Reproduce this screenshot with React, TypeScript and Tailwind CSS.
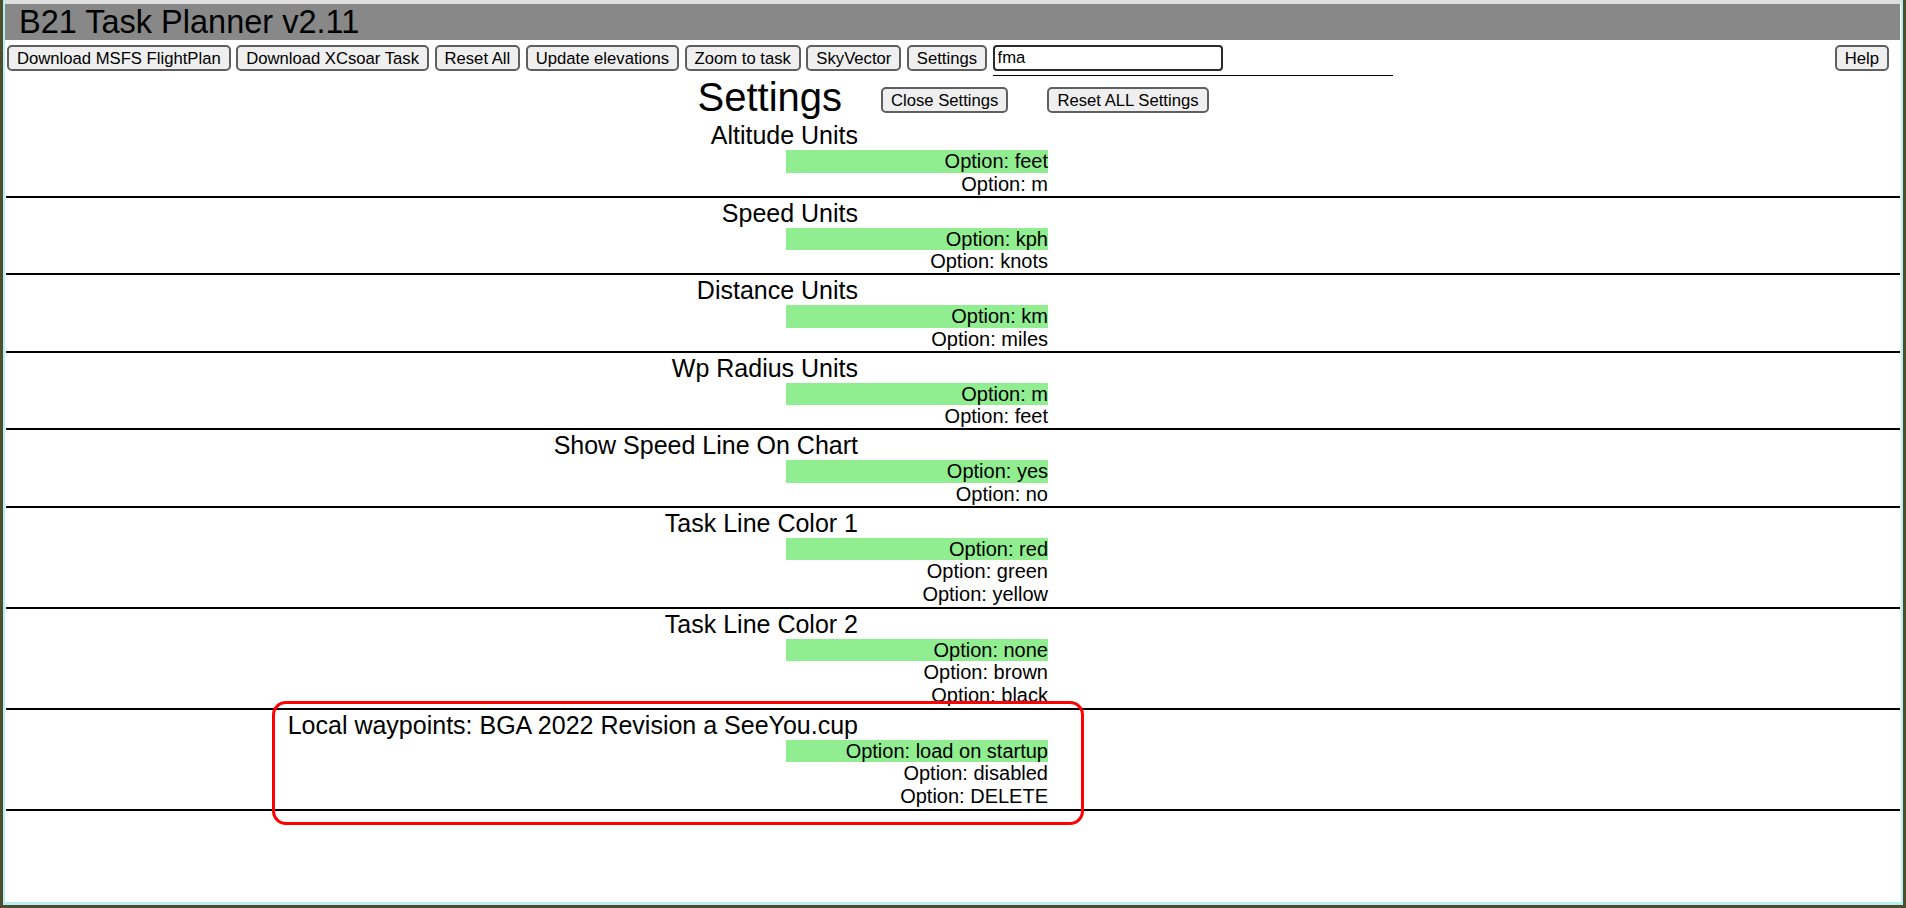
import React from 'react'

const settings = [
  { title: 'Altitude Units', options: ['feet', 'm'] },
  { title: 'Speed Units', options: ['kph', 'knots'] },
  { title: 'Distance Units', options: ['km', 'miles'] },
  { title: 'Wp Radius Units', options: ['m', 'feet'] },
  { title: 'Show Speed Line On Chart', options: ['yes', 'no'] },
  { title: 'Task Line Color 1', options: ['red', 'green', 'yellow'] },
  { title: 'Task Line Color 2', options: ['none', 'brown', 'black'] },
  {
    title: 'Local waypoints: BGA 2022 Revision a SeeYou.cup',
    options: ['load on startup', 'disabled', 'DELETE'],
    marked: true,
  },
]

const toolbar = [
  'Download MSFS FlightPlan',
  'Download XCsoar Task',
  'Reset All',
  'Update elevations',
  'Zoom to task',
  'SkyVector',
  'Settings',
]

function Btn({ label }: { label: string }) {
  return (
    <button className="h-[26px] shrink-0 rounded-[5px] border-2 border-[#5f5f5f] bg-[#efefef] px-[8px] text-[16.67px] leading-[19px] text-black">
      {label}
    </button>
  )
}

function SettingRow({ title, options, marked }: { title: string; options: string[]; marked?: boolean }) {
  return (
    <div className={options.length > 2 ? 'relative border-b-2 border-black pb-[0.75px]' : 'relative border-b-2 border-black'}>
      {/* heading */}
      <div className="h-[30px] w-[852px] whitespace-nowrap text-right text-[25px] leading-[30px]">{title}</div>

      {/* options, first one is the active one */}
      <div className="flex w-[1042px] flex-col">
        {options.map((opt, i) => (
          <div
            key={opt}
            className={
              i === 0
                ? 'ml-auto h-[22.75px] w-[262px] whitespace-nowrap bg-[#90ee90] text-right text-[20px] leading-[22.75px]'
                : 'h-[22.75px] whitespace-nowrap text-right text-[20px] leading-[22.75px]'
            }
          >
            Option: {opt}
          </div>
        ))}
      </div>

      {/* red annotation box */}
      {marked && (
        <div className="pointer-events-none absolute left-[266px] top-[-9px] h-[124px] w-[812px] rounded-[14px] border-[3px] border-[#ff0000]" />
      )}
    </div>
  )
}

export default function App() {
  return (
    <div className="h-[908px] w-full overflow-hidden bg-[#4f4d2e] px-[3px] pb-[3px] font-[Liberation_Sans,Arial,sans-serif] text-black">
      <div className="flex h-full flex-col border-x-2 border-b-[3px] border-[#b4f0f0] bg-white">
        <div className="h-[4px] bg-[#dedede]" />

        <div className="px-[1px]">
          {/* Title bar */}
          <div className="-ml-[1px] h-[36px] bg-[#888888] pl-[14px] text-[32.5px] leading-[36px]">B21 Task Planner v2.11</div>

          {/* Toolbar */}
          <div className="mt-[5px] flex items-center gap-[5.5px] pl-[1px] pr-[11px]">
            {toolbar.map((b) => (
              <Btn key={b} label={b} />
            ))}
            <div className="relative">
              <input
                defaultValue="fma"
                className="h-[26px] w-[230px] rounded-[4px] border-2 border-[#2b2b2b] bg-white px-[3px] text-[16.67px] outline-none"
              />
              <div className="absolute left-0 top-[30px] h-px w-[400px] bg-black" />
            </div>
            <div className="ml-auto">
              <Btn label="Help" />
            </div>
          </div>

          {/* Settings header */}
          <div className="mt-[3px] flex h-[46px] items-start justify-center gap-[39px]">
            <div className="text-[40px] leading-[46px]">Settings</div>
            <div className="mt-[13px]">
              <Btn label="Close Settings" />
            </div>
            <div className="mt-[13px]">
              <Btn label="Reset ALL Settings" />
            </div>
          </div>

          {/* Settings list */}
          <div className="flex flex-col">
            {settings.map((s) => (
              <SettingRow key={s.title} title={s.title} options={s.options} marked={s.marked} />
            ))}
          </div>
        </div>
      </div>
    </div>
  )
}
